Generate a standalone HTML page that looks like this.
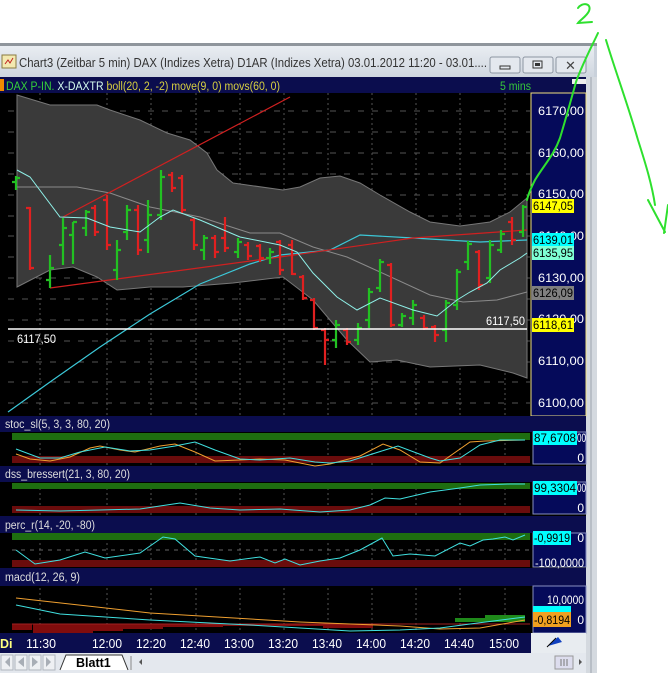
<!DOCTYPE html>
<html><head><meta charset="utf-8"><style>
html,body{margin:0;padding:0;background:#fff;width:668px;height:673px;overflow:hidden}
svg{display:block;font-family:"Liberation Sans",sans-serif}
</style></head><body>
<svg width="668" height="673" viewBox="0 0 668 673" xmlns="http://www.w3.org/2000/svg">
<defs>
<linearGradient id="tb" x1="0" y1="0" x2="0" y2="1"><stop offset="0" stop-color="#e9edf2"/><stop offset="1" stop-color="#cfd6df"/></linearGradient>
</defs>
<rect x="0" y="0" width="668" height="673" fill="#fff"/>
<rect x="0" y="43" width="597" height="630" fill="#c9d1db"/>
<rect x="0" y="43" width="597" height="3" fill="#8f959c"/>
<rect x="0" y="46" width="594" height="31" fill="url(#tb)"/>
<rect x="2" y="55" width="14" height="13" fill="#f3e9b0" stroke="#8a7a40"/>
<path d="M5 64 L8 60 L10 63 L13 58" stroke="#c02020" fill="none"/>
<text x="19" y="67" font-size="12.5" fill="#333" textLength="468" lengthAdjust="spacingAndGlyphs">Chart3 (Zeitbar 5 min)  DAX (Indizes Xetra) D1AR (Indizes Xetra) 03.01.2012 11:20 - 03.01....</text>
<g fill="#e4e8ee" stroke="#8d96a2"><rect x="490" y="57" width="30" height="16" rx="2"/><rect x="523" y="57" width="30" height="16" rx="2"/><rect x="556" y="57" width="30" height="16" rx="2"/></g>
<rect x="500" y="66" width="10" height="3" fill="none" stroke="#333"/>
<rect x="533" y="61" width="9" height="7" fill="none" stroke="#333"/><rect x="535" y="63" width="5" height="3" fill="#333"/>
<text x="565" y="70" font-size="13" fill="#444">✕</text>
<rect x="0" y="77" width="586" height="576" fill="#000"/>
<rect x="586" y="77" width="11" height="596" fill="#d4d9df"/>
<rect x="590" y="77" width="2" height="596" fill="#b8bec6"/>
<rect x="0" y="77" width="586" height="16" fill="#0b0d4e"/>
<rect x="0" y="79" width="4" height="12" fill="#f08a00"/>
<text x="6" y="90" font-size="11.5" textLength="274" lengthAdjust="spacingAndGlyphs"><tspan fill="#36d13a">DAX P-IN.</tspan><tspan fill="#d8fff0"> X-DAXTR</tspan><tspan fill="#d8d040"> boll(20, 2, -2) move(9, 0) movs(60, 0)</tspan></text>
<text x="500" y="90" font-size="11.5" fill="#36c83a" textLength="31" lengthAdjust="spacingAndGlyphs">5 mins</text>
<rect x="572" y="79" width="14" height="5" fill="#eee"/>
<rect x="531" y="93" width="55" height="323" fill="#050a5a" stroke="#f0e080" stroke-width="1"/>
<g font-size="12" fill="#fff">
<text x="538" y="115" textLength="46" lengthAdjust="spacingAndGlyphs">6170,00</text><text x="538" y="157" textLength="46" lengthAdjust="spacingAndGlyphs">6160,00</text><text x="538" y="198" textLength="46" lengthAdjust="spacingAndGlyphs">6150,00</text><text x="538" y="240" textLength="46" lengthAdjust="spacingAndGlyphs">6140,00</text><text x="538" y="282" textLength="46" lengthAdjust="spacingAndGlyphs">6130,00</text><text x="538" y="323" textLength="46" lengthAdjust="spacingAndGlyphs">6120,00</text><text x="538" y="365" textLength="46" lengthAdjust="spacingAndGlyphs">6110,00</text><text x="538" y="407" textLength="46" lengthAdjust="spacingAndGlyphs">6100,00</text>
</g>
<g stroke="#555" stroke-dasharray="2,3" stroke-width="1">
<path d="M40 93V633M107 93V633M151 93V633M196 93V633M240 93V633M284 93V633M328 93V633M372 93V633M416 93V633M460 93V633M505 93V633"/>
</g>
<g stroke="#555" stroke-dasharray="6,8" stroke-width="1">
<path d="M8 111H530M8 132H530M8 153H530M8 174H530M8 195H530M8 216H530M8 236H530M8 257H530M8 278H530M8 299H530M8 320H530M8 341H530M8 362H530M8 382H530M8 403H530"/>
</g>
<path d="M17 95 L50 105 L97 105 L110 110 L140 120 L167 133 L190 140 L207 153 L217 170 L233 183 L283 190 L300 187 L320 178 L340 176 L360 183 L380 195 L410 212 L430 222 L460 226 L490 222 L510 212 L527 198 L527 378 L513 373 L480 365 L430 367 L397 360 L370 362 L347 340 L313 300 L300 290 L283 277 L233 283 L183 287 L150 287 L117 290 L97 277 L73 267 L50 270 L17 287 Z" fill="#3a3a3a" stroke="#777" stroke-width="1"/>
<path d="M17 187 L77 187 L110 193 L150 207 L200 217 L250 233 L280 233 L313 247 L347 257 L380 272 L430 295 L463 302 L497 300 L527 292" fill="none" stroke="#8a8a8a"/>
<path d="M8 412 L50 382 L100 347 L150 314 L200 284 L250 264 L280 255 L330 250 L360 235 L413 238 L480 242 L527 240" fill="none" stroke="#3cc8d8" stroke-width="1.2"/>
<path d="M63 217 L290 97" stroke="#d02020" stroke-width="1.2"/>
<path d="M50 288 L280 257 L413 238 L527 230" stroke="#d02020" stroke-width="1.2" fill="none"/>
<g stroke-width="2.2" fill="none">
<path stroke="#22c022" d="M16 176V190M12 182H16M16 178H20 M50 255V288M46 280H50M50 268H54 M63 218V265M59 245H63M63 228H67 M73 222V264M69 235H73M73 222H77 M86 210V236M82 228H86M86 212H90 M117 240V280M113 270H117M117 250H121 M127 205V240M123 232H127M127 210H131 M148 200V253M144 240H148M148 215H152 M161 170V220M157 215H161M161 177H165 M204 235V260M200 250H204M204 238H208 M238 238V258M234 252H238M238 242H242 M270 248V264M266 258H270M270 252H274 M336 320V348M332 340H336M336 325H340 M358 323V345M354 340H358M358 328H362 M369 288V328M365 320H369M369 292H373 M380 259V292M376 288H380M380 262H384 M402 313V327M398 325H402M402 316H406 M413 300V325M409 318H413M413 305H417 M446 300V342M442 330H446M446 303H450 M457 269V310M453 305H457M457 272H461 M468 241V270M464 262H468M468 244H472 M490 240V283M486 278H490M490 245H494 M501 230V253M497 250H501M501 234H505 M523 205V237M519 232H523M523 207H527"/>
<path stroke="#e02020" d="M30 207V270M26 208H30M30 268H34 M95 205V236M91 208H95M95 232H99 M107 195V250M103 200H107M107 245H111 M138 205V255M134 210H138M138 250H142 M172 172V192M168 175H172M172 188H176 M182 175V213M178 178H182M182 210H186 M194 218V250M190 220H194M194 245H198 M215 235V258M211 238H215M215 252H219 M225 217V252M221 238H225M225 248H229 M248 242V260M244 245H248M248 256H252 M260 244V262M256 246H260M260 258H264 M280 240V275M276 242H280M280 270H284 M292 240V275M288 245H292M292 274H296 M303 275V300M299 277H303M303 298H307 M314 298V330M310 300H314M314 328H318 M325 328V365M321 330H325M325 340H329 M347 328V345M343 330H347M347 342H351 M391 263V327M387 265H391M391 325H395 M424 315V330M420 318H424M424 328H428 M435 325V342M431 327H435M435 335H439 M479 250V290M475 252H479M479 285H483 M512 217V245M508 222H512M512 240H516"/>
</g>
<path d="M17 170 L30 177 L60 217 L87 218 L110 227 L140 232 L160 217 L173 210 L200 220 L240 237 L280 245 L297 252 L313 273 L337 297 L357 310 L380 298 L413 310 L437 316 L457 300 L470 292 L487 283 L500 270 L520 258 L527 253" fill="none" stroke="#8ff0e8" stroke-width="1"/>
<path d="M8 329H527" stroke="#fff" stroke-width="1.5"/>
<text x="17" y="343" font-size="11.5" fill="#fff" textLength="39" lengthAdjust="spacingAndGlyphs">6117,50</text>
<text x="486" y="325" font-size="11.5" fill="#fff" textLength="39" lengthAdjust="spacingAndGlyphs">6117,50</text>
<g font-size="12">
<rect x="532" y="199" width="42" height="14" fill="#ffff00"/><text x="533" y="210" fill="#000" textLength="40" lengthAdjust="spacingAndGlyphs">6147,05</text>
<rect x="532" y="233" width="42" height="14" fill="#00ffff"/><text x="533" y="244" fill="#000" textLength="40" lengthAdjust="spacingAndGlyphs">6139,01</text>
<rect x="532" y="246" width="42" height="14" fill="#7fffd4"/><text x="533" y="257" fill="#000" textLength="40" lengthAdjust="spacingAndGlyphs">6135,95</text>
<rect x="532" y="286" width="42" height="14" fill="#808080"/><text x="533" y="297" fill="#000" textLength="40" lengthAdjust="spacingAndGlyphs">6126,09</text>
<rect x="532" y="318" width="42" height="14" fill="#ffff00"/><text x="533" y="329" fill="#000" textLength="40" lengthAdjust="spacingAndGlyphs">6118,61</text>
</g>
<g font-size="11.5" fill="#ddd">
<rect x="0" y="416" width="586" height="16" fill="#0b0d4e"/><text x="5" y="428" textLength="105" lengthAdjust="spacingAndGlyphs">stoc_sl(5, 3, 3, 80, 20)</text>
<rect x="0" y="466" width="586" height="16" fill="#0b0d4e"/><text x="5" y="478" textLength="125" lengthAdjust="spacingAndGlyphs">dss_bressert(21, 3, 80, 20)</text>
<rect x="0" y="516" width="586" height="17" fill="#0b0d4e"/><text x="5" y="529" textLength="90" lengthAdjust="spacingAndGlyphs">perc_r(14, -20, -80)</text>
<rect x="0" y="568" width="586" height="18" fill="#0b0d4e"/><text x="5" y="581" textLength="75" lengthAdjust="spacingAndGlyphs">macd(12, 26, 9)</text>
</g>
<g fill="#050a5a" stroke="#8890c0">
<rect x="533" y="432" width="53" height="32"/><rect x="533" y="482" width="53" height="32"/><rect x="533" y="533" width="53" height="34"/><rect x="533" y="586" width="53" height="47"/>
</g>
<g fill="#1e6e10"><rect x="12" y="433" width="518" height="7"/><rect x="12" y="483" width="518" height="6"/><rect x="12" y="533" width="518" height="7"/></g>
<g fill="#6a0c0c"><rect x="12" y="456" width="518" height="7"/><rect x="12" y="506" width="518" height="7"/><rect x="12" y="560" width="518" height="7"/></g>
<path d="M12 550H530" stroke="#666" stroke-dasharray="4,5"/>
<path d="M16 454 L30 459 L50 461 L70 457 L90 448 L100 446 L120 450 L135 452 L160 446 L175 444 L195 452 L215 461 L240 460 L260 459 L285 460 L315 466 L330 464 L360 456 L383 444 L400 450 L420 462 L440 463 L470 442 L485 441 L525 440" fill="none" stroke="#f0a030"/>
<path d="M16 449 L40 458 L60 458 L80 452 L105 447 L130 451 L150 450 L175 446 L195 442 L215 450 L240 459 L260 460 L290 458 L315 462 L330 463 L350 461 L385 450 L398 446 L430 458 L440 461 L460 458 L480 445 L500 440 L525 440" fill="none" stroke="#40e0e0"/>
<path d="M16 510 L60 511 L100 510 L140 509 L160 506 L180 503 L210 508 L240 510 L280 509 L320 512 L350 510 L370 505 L385 498 L400 499 L430 492 L460 488 L480 485 L510 484 L525 484" fill="none" stroke="#40e0e0"/>
<path d="M16 550 L35 564 L60 560 L85 552 L105 558 L140 553 L163 537 L175 539 L195 556 L230 561 L260 557 L275 563 L285 559 L300 565 L320 561 L340 558 L360 550 L382 538 L393 556 L410 554 L435 556 L460 543 L470 546 L483 540 L493 539 L505 537 L513 540 L525 535" fill="none" stroke="#40e0e0"/>
<g fill="#800c0c">
<rect x="12" y="624" width="20" height="6"/><rect x="33" y="624" width="10" height="10"/><rect x="43" y="624" width="25" height="11"/><rect x="68" y="624" width="25" height="9"/><rect x="93" y="624" width="30" height="7"/><rect x="123" y="624" width="40" height="5"/><rect x="163" y="624" width="60" height="3"/><rect x="223" y="624" width="100" height="2"/><rect x="323" y="624" width="50" height="4"/>
</g>
<g fill="#1f8a1a"><rect x="455" y="618" width="30" height="4"/><rect x="485" y="615" width="40" height="7"/></g>
<path d="M12 624H530" stroke="#a02020"/>
<path d="M16 598 L150 613 L300 622 L400 626 L440 629 L480 628 L525 620" fill="none" stroke="#f0a030"/>
<path d="M16 605 L60 614 L150 620 L250 625 L350 631 L400 630 L440 628 L470 624 L525 617" fill="none" stroke="#40e0e0"/>
<g font-size="12">
<rect x="533" y="431" width="44" height="14" fill="#00ffff"/><text x="534" y="442" fill="#000" textLength="42" lengthAdjust="spacingAndGlyphs">87,6708</text><text x="577" y="442" fill="#fff" textLength="9" lengthAdjust="spacingAndGlyphs">00</text><text x="584" y="462" fill="#fff" text-anchor="end">0</text>
<rect x="533" y="481" width="44" height="14" fill="#00ffff"/><text x="534" y="492" fill="#000" textLength="42" lengthAdjust="spacingAndGlyphs">99,3304</text><text x="577" y="492" fill="#fff" textLength="9" lengthAdjust="spacingAndGlyphs">00</text><text x="584" y="512" fill="#fff" text-anchor="end">0</text>
<rect x="533" y="531" width="38" height="14" fill="#00ffff"/><text x="534" y="542" fill="#000" textLength="36" lengthAdjust="spacingAndGlyphs">-0,9919</text><text x="584" y="542" fill="#fff" text-anchor="end">0</text>
<text x="535" y="567" fill="#fff" textLength="49" lengthAdjust="spacingAndGlyphs">-100,0000</text>
<text x="547" y="604" fill="#fff" textLength="37" lengthAdjust="spacingAndGlyphs">10,0000</text>
<rect x="533" y="606" width="38" height="8" fill="#00ffff"/>
<rect x="533" y="612" width="38" height="15" fill="#f0a020"/><text x="534" y="624" fill="#000" textLength="36" lengthAdjust="spacingAndGlyphs">-0,8194</text><text x="584" y="624" fill="#fff" text-anchor="end">0</text>
</g>
<rect x="0" y="633" width="531" height="20" fill="#0b0d4e"/>
<rect x="531" y="633" width="55" height="20" fill="#e8ecf0"/>
<path d="M548 646 L558 637 L562 642 Z" fill="#1040c0"/><path d="M547 647 L556 638" stroke="#000"/>
<g font-size="12.5" fill="#fff">
<text x="0" y="648" fill="#ffff80" font-weight="bold">Di</text>
<text x="26" y="648" textLength="30" lengthAdjust="spacingAndGlyphs">11:30</text><text x="92" y="648" textLength="30" lengthAdjust="spacingAndGlyphs">12:00</text><text x="136" y="648" textLength="30" lengthAdjust="spacingAndGlyphs">12:20</text><text x="180" y="648" textLength="30" lengthAdjust="spacingAndGlyphs">12:40</text><text x="224" y="648" textLength="30" lengthAdjust="spacingAndGlyphs">13:00</text><text x="268" y="648" textLength="30" lengthAdjust="spacingAndGlyphs">13:20</text><text x="312" y="648" textLength="30" lengthAdjust="spacingAndGlyphs">13:40</text><text x="356" y="648" textLength="30" lengthAdjust="spacingAndGlyphs">14:00</text><text x="400" y="648" textLength="30" lengthAdjust="spacingAndGlyphs">14:20</text><text x="444" y="648" textLength="30" lengthAdjust="spacingAndGlyphs">14:40</text><text x="489" y="648" textLength="30" lengthAdjust="spacingAndGlyphs">15:00</text>
</g>
<rect x="0" y="653" width="586" height="20" fill="#e4e8ee"/>
<g fill="#eef0f3" stroke="#b0b6be"><rect x="1" y="655" width="12" height="15"/><rect x="15" y="655" width="12" height="15"/><rect x="29" y="655" width="12" height="15"/><rect x="43" y="655" width="12" height="15"/></g>
<g fill="#a8aeb6"><path d="M5 662 L10 657 V667Z"/><path d="M18 662 L24 657 V667Z"/><path d="M32 657 L38 662 L32 667Z"/><path d="M46 657 L51 662 L46 667Z"/></g>
<path d="M60 670 L66 655 H122 L128 670" fill="#fff" stroke="#333"/>
<text x="76" y="667" font-size="12.5" font-weight="bold" fill="#000">Blatt1</text>
<path d="M131 656 V670" stroke="#888"/>
<path d="M139 662 L142 659 V665Z" fill="#555"/>
<rect x="555" y="656" width="18" height="13" fill="#dde" stroke="#999"/>
<path d="M561 659V666M564 659V666M567 659V666" stroke="#777"/>
<path d="M579 659 L582 662 L579 665Z" fill="#555"/>
<g stroke="#2ee02e" stroke-width="2" fill="none" stroke-linecap="round">
<path d="M578 8 C582 2 592 3 589 11 C587 16 580 20 578 23 L592 22"/>
<path d="M598 33 C590 50 582 65 576 82 C571 100 566 118 560 138 C554 155 544 165 535 180 C531 188 528 195 527 200"/>
<path d="M606 40 C615 70 628 105 638 140 C646 165 652 185 655 205"/>
<path d="M648 200 L665 232 M668 205 L664 233"/>
</g>
</svg>
</body></html>
